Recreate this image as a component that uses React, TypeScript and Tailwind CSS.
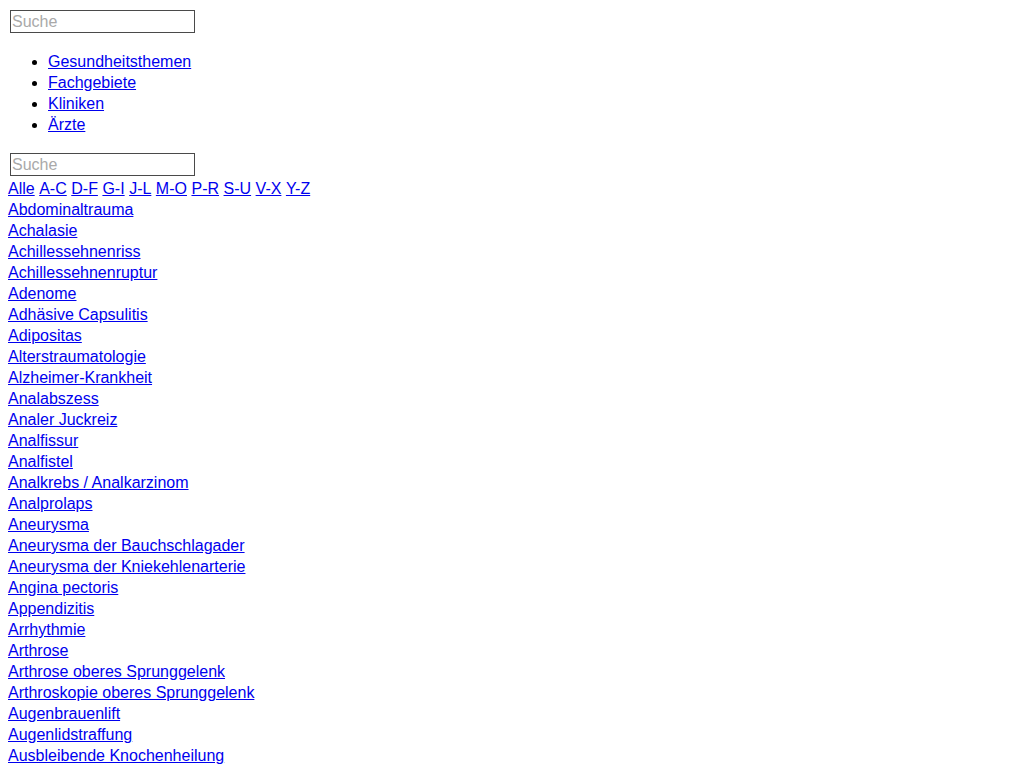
const navItems = ['Gesundheitsthemen', 'Fachgebiete', 'Kliniken', 'Ärzte'];

const letters = ['Alle', 'A-C', 'D-F', 'G-I', 'J-L', 'M-O', 'P-R', 'S-U', 'V-X', 'Y-Z'];

const topics = [
  'Abdominaltrauma',
  'Achalasie',
  'Achillessehnenriss',
  'Achillessehnenruptur',
  'Adenome',
  'Adhäsive Capsulitis',
  'Adipositas',
  'Alterstraumatologie',
  'Alzheimer-Krankheit',
  'Analabszess',
  'Analer Juckreiz',
  'Analfissur',
  'Analfistel',
  'Analkrebs / Analkarzinom',
  'Analprolaps',
  'Aneurysma',
  'Aneurysma der Bauchschlagader',
  'Aneurysma der Kniekehlenarterie',
  'Angina pectoris',
  'Appendizitis',
  'Arrhythmie',
  'Arthrose',
  'Arthrose oberes Sprunggelenk',
  'Arthroskopie oberes Sprunggelenk',
  'Augenbrauenlift',
  'Augenlidstraffung',
  'Ausbleibende Knochenheilung',
];

function SearchBox() {
  return (
    <div className="p-[2px]">
      <input
        type="text"
        placeholder="Suche"
        className="block w-[185px] h-[23px] px-[1px] border border-[#4a4a4a] text-[16px] leading-[21px] text-black placeholder:text-[#a9a9a9] bg-white outline-none"
      />
    </div>
  );
}

export default function App() {
  return (
    <div
      className="p-2 text-[16px] leading-[21px] text-black bg-white"
      style={{ fontFamily: '"Liberation Sans", Arial, sans-serif' }}
    >
      <SearchBox />
      <ul className="list-disc pl-10 my-4">
        {navItems.map((n) => (
          <li key={n}>
            <a href="#" className="text-[#0000ee] underline">
              {n}
            </a>
          </li>
        ))}
      </ul>
      <SearchBox />
      <div className="flex gap-[4.5px]">
        {letters.map((l) => (
          <a key={l} href="#" className="text-[#0000ee] underline">
            {l}
          </a>
        ))}
      </div>
      <div>
        {topics.map((t) => (
          <div key={t}>
            <a href="#" className="text-[#0000ee] underline">
              {t}
            </a>
          </div>
        ))}
      </div>
    </div>
  );
}
